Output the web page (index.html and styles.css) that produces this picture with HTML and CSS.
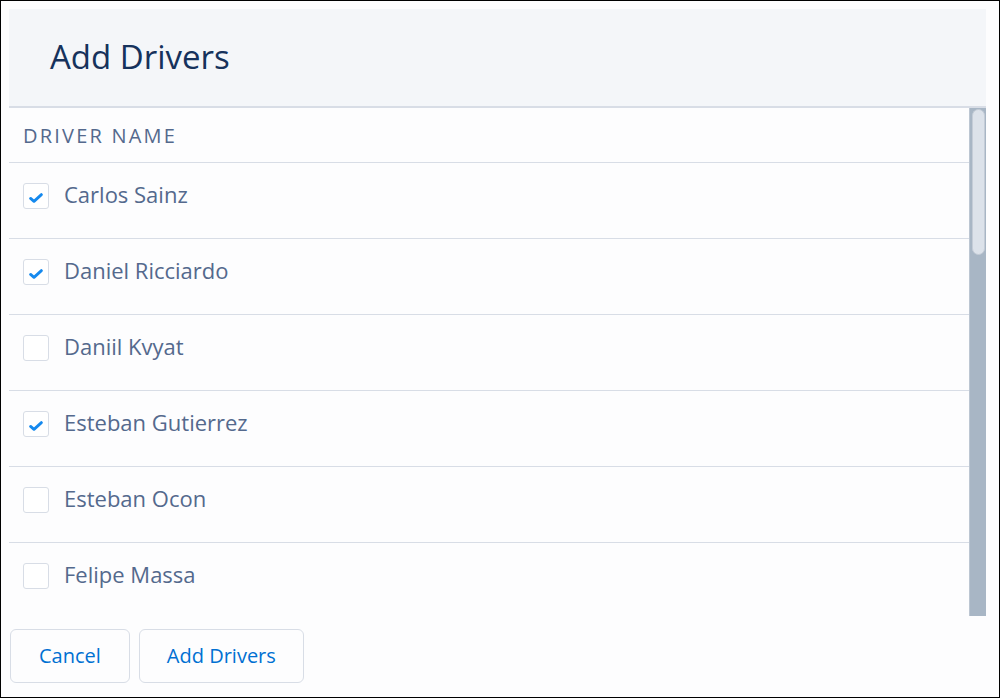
FILE: index.html
```html
<!DOCTYPE html>
<html lang="en">
<head>
<meta charset="utf-8">
<title>Add Drivers</title>
<link rel="stylesheet" href="styles.css">
</head>
<body>
<div class="frame">
  <section class="modal">
    <header class="modal-header">
      <h1 class="modal-title">Add Drivers</h1>
    </header>
    <div class="table">
      <div class="table-body">
        <div class="th">Driver Name</div>
        <ul class="rows">
          <li class="row"><span class="cb checked"><svg viewBox="0 0 14 10" width="14" height="10"><path d="M1.6 5.4 L5 8.4 L12.4 1.6" fill="none" stroke="#1589ee" stroke-width="2.8" stroke-linecap="round" stroke-linejoin="round"/></svg></span><span class="name">Carlos Sainz</span></li>
          <li class="row"><span class="cb checked"><svg viewBox="0 0 14 10" width="14" height="10"><path d="M1.6 5.4 L5 8.4 L12.4 1.6" fill="none" stroke="#1589ee" stroke-width="2.8" stroke-linecap="round" stroke-linejoin="round"/></svg></span><span class="name">Daniel Ricciardo</span></li>
          <li class="row"><span class="cb"></span><span class="name">Daniil Kvyat</span></li>
          <li class="row"><span class="cb checked"><svg viewBox="0 0 14 10" width="14" height="10"><path d="M1.6 5.4 L5 8.4 L12.4 1.6" fill="none" stroke="#1589ee" stroke-width="2.8" stroke-linecap="round" stroke-linejoin="round"/></svg></span><span class="name">Esteban Gutierrez</span></li>
          <li class="row"><span class="cb"></span><span class="name">Esteban Ocon</span></li>
          <li class="row"><span class="cb"></span><span class="name">Felipe Massa</span></li>
        </ul>
      </div>
      <div class="scrollbar"><div class="thumb"></div></div>
    </div>
    <footer class="modal-footer">
      <button class="btn" type="button">Cancel</button>
      <button class="btn btn-wide" type="button">Add Drivers</button>
    </footer>
  </section>
</div>
</body>
</html>
```
FILE: styles.css
```css
* { box-sizing: border-box; }

html, body {
  margin: 0;
  padding: 0;
  background: #ffffff;
}

body {
  font-family: "Open Sans", "Liberation Sans", sans-serif;
}

.frame {
  width: 1000px;
  height: 698px;
  border: 1px solid #000;
  background: #fdfdfe;
  padding: 8px 13px 0 8px;
  overflow: hidden;
}

.modal {
  display: flex;
  flex-direction: column;
}

.modal-header {
  height: 99px;
  background: #f4f6f9;
  border-bottom: 2px solid #d8dde6;
  display: flex;
  align-items: center;
  padding-left: 41px;
  padding-bottom: 1px;
}

.modal-title {
  margin: 0;
  font-weight: 400;
  font-size: 33px;
  color: #16325c;
  line-height: 40px;
}

.table {
  display: flex;
  height: 508px;
  background: #fdfdfe;
}

.table-body {
  flex: 1;
  overflow: hidden;
}

.scrollbar {
  width: 17px;
  flex: none;
  background: #a8b6c5;
  border-left: 1px solid #bcc6d2;
  padding: 1px 1px 0 2px;
}

.thumb {
  height: 146px;
  border-radius: 8px;
  background: #dce2ea;
  border: 1px solid #c4ccd7;
}

.th {
  height: 55px;
  border-bottom: 1px solid #d8dde6;
  padding-left: 14px;
  display: flex;
  align-items: center;
  font-size: 20px;
  letter-spacing: 2.2px;
  text-transform: uppercase;
  color: #54698d;
}

.rows {
  list-style: none;
  margin: 0;
  padding: 0;
}

.row {
  height: 76px;
  border-bottom: 1px solid #d8dde6;
  padding: 20px 0 0 14px;
  display: flex;
  align-items: flex-start;
  gap: 15px;
}

.cb {
  width: 26px;
  height: 26px;
  border: 1px solid #d8dde6;
  border-radius: 3px;
  background: #fff;
  display: flex;
  align-items: center;
  justify-content: center;
  padding-top: 4px;
  flex: none;
}

.cb svg {
  display: block;
}

.name {
  font-size: 22px;
  line-height: 22px;
  color: #54698d;
}

.modal-footer {
  display: flex;
  gap: 9px;
  padding: 13px 0 0 1px;
}

.btn {
  height: 54px;
  padding: 0 28px;
  border: 1px solid #d8dde6;
  border-radius: 6px;
  background: #fdfdfe;
  color: #0070d2;
  font-family: "Open Sans", "Liberation Sans", sans-serif;
  font-size: 20px;
  padding-bottom: 2px;
}

.btn-wide {
  padding: 0 27px 2px;
}
```
